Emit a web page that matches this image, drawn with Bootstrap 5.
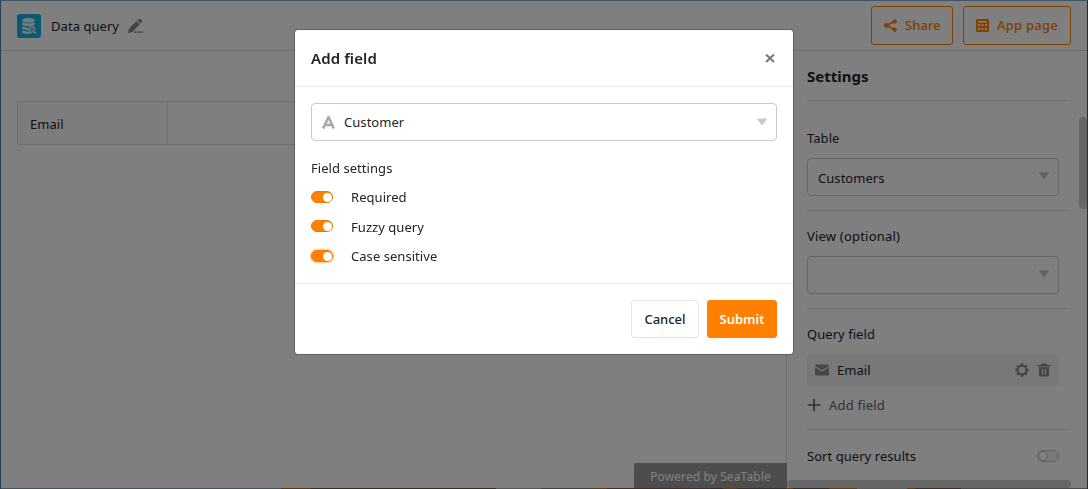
<!DOCTYPE html>
<html lang="en">
<head>
<meta charset="utf-8">
<meta name="viewport" content="width=device-width, initial-scale=1">
<title>Data query</title>
<link rel="stylesheet" href="https://cdn.jsdelivr.net/npm/bootstrap@5.3.0/dist/css/bootstrap.min.css">
<style>
html,body{height:100%;overflow:hidden}
body{font-family:"Noto Sans","Open Sans",sans-serif;font-size:13px;line-height:20px;color:#212529;letter-spacing:.05px}
svg{display:block;flex:none}
.app-window{height:489px;border:1px solid #7eaed0;border-left-color:#4c83b8;border-right-color:#43607e;border-bottom:0}
.topbar{height:50px;border-bottom:1px solid #dcdcdc;padding:0 16px}
.app-logo{width:24px;height:24px;border-radius:3px;background:#10b4e8}
.app-name{margin-left:10px}
.btn-line{--bs-btn-color:#ff8000;--bs-btn-border-color:#ff8000;height:39px;font-size:13px;font-weight:500;border-radius:3px;padding:0 0 0 12px;letter-spacing:.05px;white-space:nowrap}
.btn-share{width:82px}
.btn-app{width:108px;letter-spacing:.25px}
.work{height:437px}
.preview{padding:50px 0 0 16px}
.query-row{height:44px;border:1px solid #dcdcdc;border-right:0;border-radius:3px 0 0 3px}
.query-label{width:150px;padding:2px 12px 0;background:#fafafa;border-right:1px solid #dcdcdc}
.powered{width:153px;height:25px;margin-right:-1px;z-index:1;background:#9a9a9a;color:#fff;border-radius:3px 0 0 0;font-size:12px;letter-spacing:.1px;padding-top:2px}
.sidebar{width:301px;border-left:1px solid #dcdcdc}
.side-content{width:292px;padding:15px 12px 0 20px}
.side-content h1{font-size:15px;line-height:20px;letter-spacing:0;margin-bottom:14px}
.rule{height:1px;background:#dcdcdc}
.section{width:252px;padding-top:15px}
.pick{height:38px;border:1px solid #c9c9c9;border-radius:4px;padding:0 8px 0 10px;background:#fff}
.field-chip{height:32px;background:#f0f0f0;border-radius:3px;padding:0 8px}
.vbar{width:8px;height:92px;margin-top:66px;border-radius:4px;background:#ccc}
.hbar{height:8px;width:284px;border-radius:4px;background:#ccc}
.desk-strip{height:1px;background:linear-gradient(90deg,#94a4ac 280px,#b87020 280px 310px,#6c6250 310px 495px,#b4aeae 495px 540px,#8c8480 540px 592px,#c47820 592px 606px,#84605a 606px 710px,#645c5c 710px 722px,#bd7830 722px 736px,#6b6364 736px 785px,#c67620 785px 792px,#665c50 792px 828px,#c97a30 828px 856px,#bbb 856px 906px,#c4742c 906px 914px,#706060 914px 960px,#999 960px)}
.modal-backdrop{--bs-backdrop-opacity:.5}
.modal-dialog{width:500px;margin:29px auto 0}
.modal-content{border-radius:4px;border-color:rgba(0,0,0,.25)}
.modal-header{height:57px;padding:0 16px;border-color:#e9e9e9}
.modal-title{font-size:15px;font-weight:600;line-height:20px;letter-spacing:.1px}
.modal-body{padding:16px 16px 17px}
.modal-footer{border-color:#e9e9e9;padding:16px;gap:8px}
.modal-footer>*{margin:0}
.modal-footer .btn{height:38px;font-size:13px;border-radius:3px;padding:2px 0 0}
.btn-cancel{width:68px;font-weight:500;--bs-btn-color:#212529;--bs-btn-border-color:#dfe4ec;--bs-btn-bg:#fff}
.btn-submit{width:70px;font-weight:600;--bs-btn-color:#fff;--bs-btn-bg:#ff8000;--bs-btn-border-color:#ff8000}
.toggle{width:22px;height:12px;border-radius:6px;background:#ff8000;border:1px solid #e87a08;display:flex;justify-content:flex-end;align-items:center;flex:none}
.toggle::after{content:"";width:9px;height:9px;border-radius:50%;background:#fff}
.toggle.focused{box-shadow:0 0 0 1.5px #ffd9b0}
.toggle.off{background:#f2f2f2;border-color:#c4c4c4;justify-content:flex-start}
.toggle.off::after{border:1px solid #c4c4c4;width:10px;height:10px}
</style>
</head>
<body>
<div class="app-window d-flex flex-column">
  <header class="topbar d-flex align-items-center">
    <span class="app-logo d-flex align-items-center justify-content-center">
      <svg width="16" height="18" viewBox="0 0 16 18"><g fill="#e8f6fc"><ellipse cx="7.5" cy="3.3" rx="6.3" ry="2.4"/><path d="M1.2 5q6.3 3 12.6 0v3q-6.3 2.7-12.6 0zM1.2 9.3q6.3 2.7 12.6 0v2.5q-6.3 2.7-12.6 0zM1.2 13q6.3 2.7 10 1v2q-5 1.8-10 0z"/></g><circle cx="10.8" cy="12.4" r="3" fill="#76cdee" stroke="#e8f6fc"/><path d="m13 14.6 2 2" stroke="#e8f6fc" stroke-width="1.5"/></svg>
    </span>
    <span class="app-name">Data query</span>
    <svg class="ms-2" width="16" height="16" viewBox="0 0 16 16" fill="#888"><path d="m1 15 1-4.500 7.600-7.400 3.200 3.200L5.400 14zM10.500 2.200 12 .9q.6-.5 1.300.1l1.700 1.700q.5.600 0 1.200l-1.300 1.500zM7.500 13.300h2V15h-2zm3 0h2V15h-2zm3 0h2V15h-2z"/></svg>
    <div class="ms-auto d-flex" style="gap:10px">
      <button class="btn btn-line btn-share d-flex align-items-center"><svg class="me-2" width="13" height="13" viewBox="0 0 13 13"><path d="M10.5 2.500 2.500 6.500l8 4" fill="none" stroke="#ff8000" stroke-width="1.600"/><g fill="#ff8000"><circle cx="10.600" cy="2.400" r="2.200"/><circle cx="2.400" cy="6.500" r="2.400"/><circle cx="10.600" cy="10.600" r="2.200"/></g></svg><span>Share</span></button>
      <button class="btn btn-line btn-app d-flex align-items-center"><svg class="me-2" width="13" height="13" viewBox="0 0 13 13"><path fill="#ff8000" fill-rule="evenodd" d="M1.500 0h10Q13 0 13 1.500v10q0 1.500-1.500 1.500h-10Q0 13 0 11.500v-10Q0 0 1.500 0zM2 2v1.500h9V2zm0 3V7h2V5zm3.500 0V7h2V5zM9 5v2h2V5zM2 9v2h2V9zm3.500 0v2h2V9zM9 9v2h2V9z"/></svg><span>App page</span></button>
    </div>
  </header>
  <div class="work d-flex">
    <main class="preview flex-grow-1 d-flex flex-column">
      <div class="query-row d-flex"><div class="query-label d-flex align-items-center">Email</div></div>
      <div class="powered mt-auto ms-auto d-flex align-items-center justify-content-center"><span>Powered by SeaTable</span></div>
    </main>
    <aside class="sidebar d-flex">
      <div class="d-flex flex-column">
        <div class="side-content flex-grow-1">
          <h1 class="fw-bold">Settings</h1>
          <div class="rule"></div>
          <div class="section" style="padding-top:27px">
            <div>Table</div>
            <div class="pick d-flex align-items-center justify-content-between" style="margin-top:10px"><span style="padding-top:2px">Customers</span><svg width="12" height="8" viewBox="0 0 12 8" style="margin-top:-2px"><path d="M.7.500h10.600L6 7.500z" fill="#c4c4c4"/></svg></div>
          </div>
          <div class="rule" style="margin-top:14px"></div>
          <div class="section">
            <div style="letter-spacing:.2px">View (optional)</div>
            <div class="pick d-flex align-items-center justify-content-end" style="margin-top:10px"><svg width="12" height="8" viewBox="0 0 12 8" style="margin-top:-2px"><path d="M.7.500h10.600L6 7.500z" fill="#c4c4c4"/></svg></div>
          </div>
          <div class="rule" style="margin-top:14px"></div>
          <div class="section">
            <div>Query field</div>
            <div class="field-chip d-flex align-items-center" style="margin-top:10px">
              <svg width="14" height="12" viewBox="0 0 14 12" fill="#8c8c8c"><path d="M0 2q0-1.500 1.500-1.500h11Q14 .500 14 2L7 6.300zM0 3.300 7 7.700l7-4.400V10q0 1.500-1.500 1.500h-11Q0 11.500 0 10z"/></svg>
              <span class="ms-2">Email</span>
              <svg class="ms-auto" width="14" height="14" viewBox="0 0 14 14"><circle cx="7" cy="7" r="4.300" fill="none" stroke="#8c8c8c" stroke-width="2"/><g stroke="#8c8c8c" stroke-width="2.600"><path d="M7 .3v2M7 11.700v2M.3 7h2M11.700 7h2M2.300 2.300l1.300 1.300M10.400 10.400l1.300 1.300M11.700 2.300l-1.300 1.300M3.600 10.400l-1.300 1.300"/></g></svg>
              <svg class="ms-2" width="14" height="14" viewBox="0 0 14 14" fill="#8c8c8c"><path fill-rule="evenodd" d="M.500 2H4V.500h6V2h3.500v1.500H.500zM2 4.200h10V12q0 1.500-1.500 1.500h-7Q2 13.500 2 12zM5 6v5.500h1.200V6zm2.800 0v5.500H9V6z"/></svg>
            </div>
            <div class="d-flex align-items-center" style="margin-top:9px;color:#666"><svg width="14" height="14" viewBox="0 0 14 14"><path d="M7 .7v12.600M.7 7h12.600" stroke="#666" stroke-width="1.700"/></svg><span class="ms-2" style="letter-spacing:.2px">Add field</span></div>
          </div>
          <div class="rule" style="margin-top:14px"></div>
          <div class="section d-flex align-items-center justify-content-between" style="padding-top:16px"><span>Sort query results</span><span class="toggle off"></span></div>
        </div>
        <div class="hbar"></div>
      </div>
      <div class="vbar"></div>
    </aside>
  </div>
  <div class="desk-strip"></div>
</div>
<div class="modal-backdrop show"></div>
<div class="modal d-block" tabindex="-1">
  <div class="modal-dialog">
    <div class="modal-content">
      <div class="modal-header">
        <h2 class="modal-title">Add field</h2>
        <svg width="14" height="14" viewBox="0 0 14 14"><path d="m3 3.500 8 7.500M11 3.500 3 11" stroke="#777" stroke-width="2"/></svg>
      </div>
      <div class="modal-body">
        <div class="pick d-flex align-items-center">
          <svg width="13" height="13" viewBox="0 0 13 13"><path d="M1.200 12.500 6.500 1l5.300 11.500M3.500 9h6" fill="none" stroke="#aaa" stroke-width="2.600"/></svg>
          <span style="margin-left:9px">Customer</span>
          <svg class="ms-auto" width="12" height="8" viewBox="0 0 12 8" style="margin-top:-1px"><path d="M.7.500h10.600L6 7.500z" fill="#c9c9c9"/></svg>
        </div>
        <div style="margin-top:17px">Field settings</div>
        <div class="d-flex align-items-center" style="margin-top:9px"><span class="toggle"></span><span style="margin-left:18px">Required</span></div>
        <div class="d-flex align-items-center" style="margin-top:10px"><span class="toggle" style="margin-top:-2px"></span><span style="margin-left:18px">Fuzzy query</span></div>
        <div class="d-flex align-items-center" style="margin-top:9px"><span class="toggle focused"></span><span style="margin-left:18px">Case sensitive</span></div>
      </div>
      <div class="modal-footer">
        <button class="btn btn-cancel">Cancel</button>
        <button class="btn btn-submit">Submit</button>
      </div>
    </div>
  </div>
</div>
<script src="https://cdn.jsdelivr.net/npm/bootstrap@5.3.0/dist/js/bootstrap.bundle.min.js"></script>
</body>
</html>
